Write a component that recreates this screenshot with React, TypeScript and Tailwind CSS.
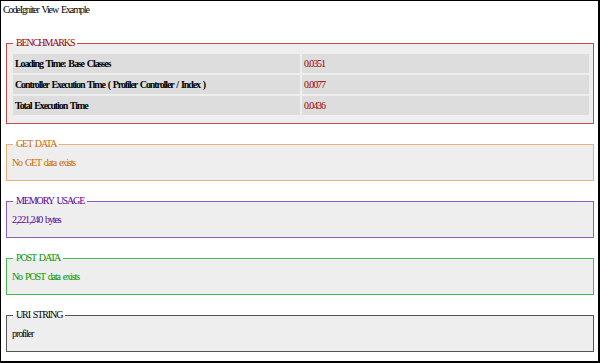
const serif = { fontFamily: '"Liberation Serif", "Times New Roman", serif' };

const benchmarks = [
  { label: 'Loading Time: Base Classes', value: '0.0351' },
  { label: 'Controller Execution Time ( Profiler Controller / Index )', value: '0.0077' },
  { label: 'Total Execution Time', value: '0.0436' },
];

function Section({
  title,
  border,
  color,
  children,
}: {
  title: string;
  border: string;
  color: string;
  children: React.ReactNode;
}) {
  return (
    <fieldset className={`border bg-[#eeeeee] pl-[5px] pr-[4px] pt-[7px] pb-[11px] ${border}`}>
      <legend className={`ml-[1px] px-[3px] leading-[12px] ${color}`}>{title}</legend>
      <div className={`leading-[12px] ${color}`}>{children}</div>
    </fieldset>
  );
}

export default function App() {
  return (
    <div
      style={serif}
      className="w-[600px] h-[363px] overflow-hidden bg-white border-t border-l border-r-2 border-b-2 border-black pt-[3px] pl-[2px] text-[10px] tracking-[-1.1px] [word-spacing:1.5px] text-black"
    >
      <div className="leading-[12px]">CodeIgniter View Example</div>

      <div className="flex flex-col gap-[14px] mt-[21px] ml-[3px] mr-[4px]">
        {/* benchmarks */}
        <fieldset className="border border-[#c24b4b] bg-[#eeeeee] pl-[6px] pr-[4px] pt-[5px] pb-[8px]">
          <legend className="px-[3px] leading-[12px] text-[#990000]">BENCHMARKS</legend>
          <div className="flex flex-col gap-[2px]">
            {benchmarks.map((row) => (
              <div key={row.label} className="grid grid-cols-2 gap-[2px] h-[19px] leading-[19px]">
                <div className="bg-[#dddddd] pl-[2px] font-bold">{row.label}</div>
                <div className="bg-[#dddddd] pl-[2px] text-[#990000]">{row.value}</div>
              </div>
            ))}
          </div>
        </fieldset>

        <Section title="GET DATA" border="border-[#e6b27a]" color="text-[#cd6e00]">
          No GET data exists
        </Section>

        <Section title="MEMORY USAGE" border="border-[#8e5bc0]" color="text-[#5a0099]">
          2,221,240 bytes
        </Section>

        <Section title="POST DATA" border="border-[#4cb84c]" color="text-[#009900]">
          No POST data exists
        </Section>

        <Section title="URI STRING" border="border-[#555555]" color="text-black">
          profiler
        </Section>
      </div>
    </div>
  );
}
